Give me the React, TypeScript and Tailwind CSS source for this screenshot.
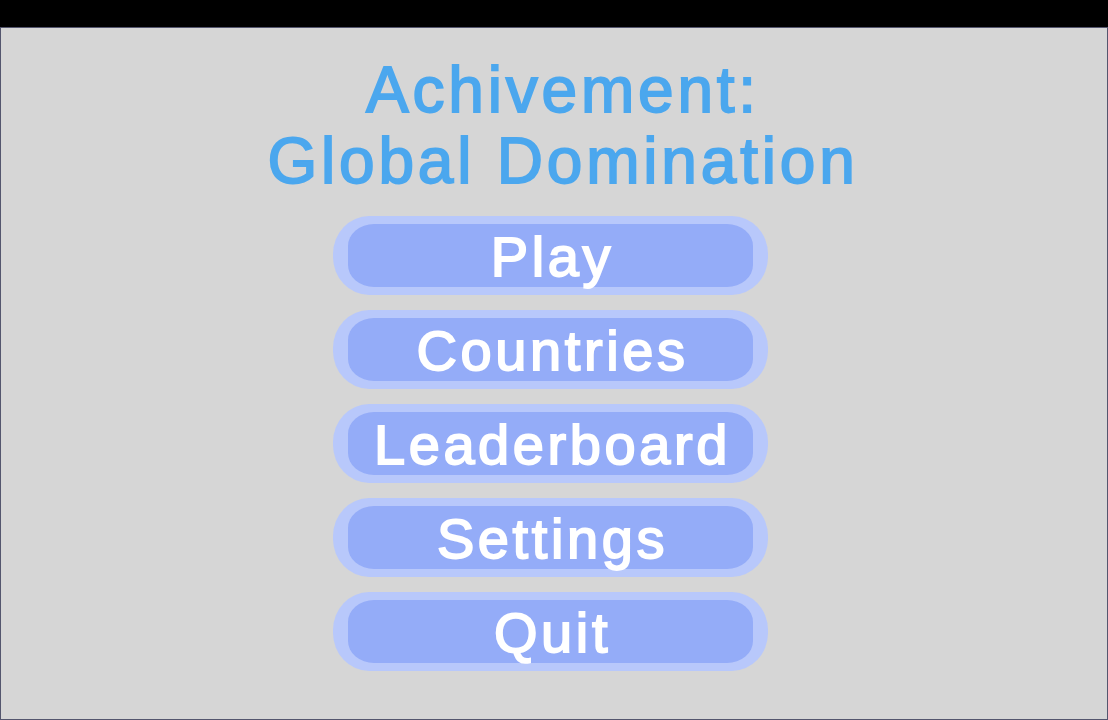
const items = ["Play", "Countries", "Leaderboard", "Settings", "Quit"];

function MenuButton({ label }: { label: string }) {
  return (
    <button
      type="button"
      className="flex h-[79px] w-[435px] cursor-pointer items-center rounded-[36px/38px] bg-[#b8c8fb] px-[15px] py-[8px]"
    >
      <span className="flex h-full w-full items-center justify-center rounded-[26px/22px] bg-[#94acf8] pt-[2px] pl-[4px] text-[56px] leading-none tracking-[3.6px] text-white [-webkit-text-stroke:1.8px_#ffffff]">
        {label}
      </span>
    </button>
  );
}

export default function App() {
  return (
    <div className="flex h-[720px] w-full flex-col bg-black font-['Liberation_Sans',Arial,sans-serif]">
      <div className="h-[27px] shrink-0" />
      <main className="flex flex-1 flex-col items-center border border-[#54566e] bg-[#d6d6d6]">
        <h1 className="mt-[27px] ml-[18px] text-center text-[64px] leading-[71px] tracking-[3.8px] text-[#4ba7ee] [-webkit-text-stroke:1.8px_#4ba7ee]">
          Achivement:
          <br />
          Global Domination
        </h1>
        <nav className="mt-[19px] mr-[7px] flex flex-col gap-[15px]">
          {items.map((label) => (
            <MenuButton key={label} label={label} />
          ))}
        </nav>
      </main>
    </div>
  );
}
